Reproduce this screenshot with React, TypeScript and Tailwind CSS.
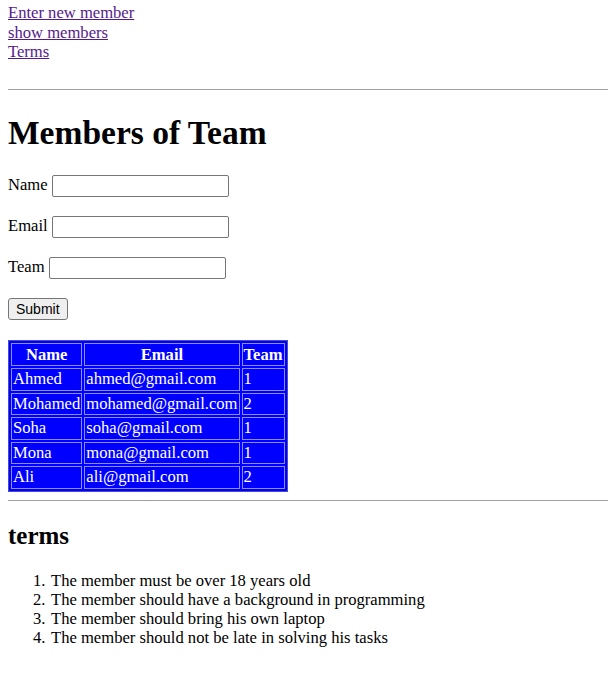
import React from 'react';

const members = [
  { name: 'Ahmed', email: 'ahmed@gmail.com', team: '1' },
  { name: 'Mohamed', email: 'mohamed@gmail.com', team: '2' },
  { name: 'Soha', email: 'soha@gmail.com', team: '1' },
  { name: 'Mona', email: 'mona@gmail.com', team: '1' },
  { name: 'Ali', email: 'ali@gmail.com', team: '2' },
];

const terms = [
  'The member must be over 18 years old',
  'The member should have a background in programming',
  'The member should bring his own laptop',
  'The member should not be late in solving his tasks',
];

const Field = ({ label }: { label: string }) => (
  <div className="flex items-center h-[22px] mt-[19px] first:mt-[23px]">
    <label>{label}</label>
    <input
      type="text"
      className="ml-[4.5px] w-[177px] h-[22px] border border-[#767676] rounded-[2px] bg-white"
    />
  </div>
);

export default function App() {
  return (
    <div className="min-h-screen bg-white text-black pl-[8px] pt-[3px] font-['Liberation_Serif',serif] text-[16.6px]">
      <div className="flex flex-col items-start leading-[19.5px]">
        <a href="#" className="text-[#551a8b] underline">Enter new member</a>
        <a href="#" className="text-[#551a8b] underline">show members</a>
        <a href="#" className="text-[#551a8b] underline">Terms</a>
      </div>

      <hr className="mt-[27px] border-0 border-t border-[#a0a0a0]" />

      <h1 className="mt-[24px] text-[33.5px] leading-[38px] font-bold">Members of Team</h1>

      <form className="flex flex-col items-start">
        <Field label="Name" />
        <Field label="Email" />
        <Field label="Team" />
        <button
          type="button"
          className="mt-[19px] h-[22px] px-[7px] bg-[#efefef] border border-[#767676] rounded-[3px] font-['Liberation_Sans',sans-serif] text-[14px] leading-none"
        >
          Submit
        </button>
      </form>

      <table className="mt-[20px] border-separate border-spacing-[2px] border border-[#4a4ac4] bg-[#0000ff] text-white leading-[18.5px]">
        <thead>
          <tr>
            <th className="border border-[#8c8cff] px-[1px] pt-[2px] pb-[1px] font-bold">Name</th>
            <th className="border border-[#8c8cff] px-[1px] pt-[2px] pb-[1px] font-bold">Email</th>
            <th className="border border-[#8c8cff] px-[1px] pt-[2px] pb-[1px] font-bold">Team</th>
          </tr>
        </thead>
        <tbody>
          {members.map((m) => (
            <tr key={m.email}>
              <td className="border border-[#8c8cff] p-[1px]">{m.name}</td>
              <td className="border border-[#8c8cff] p-[1px]">{m.email}</td>
              <td className="border border-[#8c8cff] p-[1px]">{m.team}</td>
            </tr>
          ))}
        </tbody>
      </table>

      <hr className="mt-[8px] border-0 border-t border-[#a0a0a0]" />

      <h2 className="mt-[20px] text-[25px] leading-[29px] font-bold">terms</h2>

      <ol className="mt-[21px] pl-[25px] list-none leading-[19.3px]">
        {terms.map((t, i) => (
          <li key={t}>
            <span className="inline-block w-[18px]">{i + 1}.</span>
            {t}
          </li>
        ))}
      </ol>
    </div>
  );
}
